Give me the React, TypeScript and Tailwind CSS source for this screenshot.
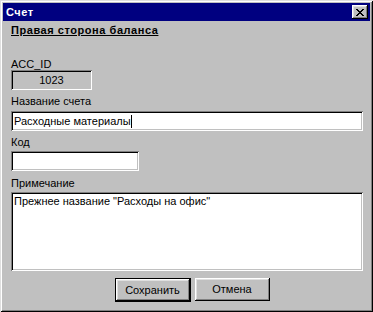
import type { ReactNode } from "react";

const raised =
    "shadow-[inset_-1px_-1px_#000,inset_1px_1px_#fff,inset_-2px_-2px_#808080,inset_2px_2px_#dfdfdf]";
const sunken =
    "shadow-[inset_1px_1px_#808080,inset_-1px_-1px_#fff,inset_2px_2px_#000,inset_-2px_-2px_#c0c0c0]";

function Label({ children, className = "" }: { children: ReactNode; className?: string }) {
    return <div className={`h-[12px] leading-[12px] text-[11px] text-black ${className}`}>{children}</div>;
}

function CloseGlyph() {
    // classic 8x7 pixel cross
    return (
        <svg width="8" height="7" viewBox="0 0 8 7" shapeRendering="crispEdges">
            <path
                fill="#000"
                d="M0 0h2v1H0zM6 0h2v1H6zM1 1h2v1H1zM5 1h2v1H5zM2 2h4v1H2zM3 3h2v1H3zM2 4h4v1H2zM1 5h2v1H1zM5 5h2v1H5zM0 6h2v1H0zM6 6h2v1H6z"
            />
        </svg>
    );
}

function Button({ text, isDefault }: { text: string; isDefault?: boolean }) {
    if (isDefault) {
        return (
            <div className="w-[76px] h-[24px] border border-black">
                <div className={`w-full h-full flex items-center justify-center text-[11px] ${raised}`}>{text}</div>
            </div>
        );
    }
    return (
        <div className={`w-[75px] h-[23px] flex items-center justify-center text-[11px] ${raised}`}>{text}</div>
    );
}

export default function App() {
    return (
        <div
            className={`w-[373px] h-[312px] bg-[#c0c0c0] p-[3px] flex flex-col font-['Liberation_Sans',Arial,sans-serif] ${"shadow-[inset_1px_1px_#dfdfdf,inset_-1px_-1px_#000,inset_2px_2px_#fff,inset_-2px_-2px_#808080]"}`}
        >
            {/* title bar */}
            <div className="h-[18px] bg-[#000080] flex items-center justify-between pl-[3px] pr-[2px]">
                <span className="text-white font-bold text-[11px] leading-[12px] tracking-[0.5px]">Счет</span>
                <div className={`w-[16px] h-[14px] bg-[#c0c0c0] flex items-center justify-center ${raised}`}>
                    <CloseGlyph />
                </div>
            </div>

            <div className="flex flex-col px-[8px]">
                <div className="mt-[3px] h-[12px] leading-[12px] text-[11px] font-bold underline underline-offset-[1px] tracking-[0.55px]">
                    Правая сторона баланса
                </div>

                <Label className="mt-[22px]">ACC_ID</Label>
                <div className={`w-[81px] h-[20px] flex items-center justify-center text-[11px] ${sunken}`}>1023</div>

                <Label className="mt-[5px]">Название счета</Label>
                <div className={`mt-[4px] w-[352px] h-[20px] bg-white flex items-center pl-[3px] text-[11px] ${sunken}`}>
                    <span>Расходные материалы</span>
                    <span className="w-[1px] h-[13px] bg-black"></span>
                </div>

                <Label className="mt-[5px]">Код</Label>
                <div className={`mt-[3px] w-[128px] h-[20px] bg-white ${sunken}`}></div>

                <Label className="mt-[6px]">Примечание</Label>
                <div className={`mt-[3px] w-[352px] h-[79px] bg-white pl-[3px] pt-[3px] text-[11px] leading-[13px] ${sunken}`}>
                    Прежнее название "Расходы на офис"
                </div>

                <div className="mt-[7px] flex justify-center gap-[4px] pl-[11px]">
                    <Button text="Сохранить" isDefault />
                    <Button text="Отмена" />
                </div>
            </div>
        </div>
    );
}
